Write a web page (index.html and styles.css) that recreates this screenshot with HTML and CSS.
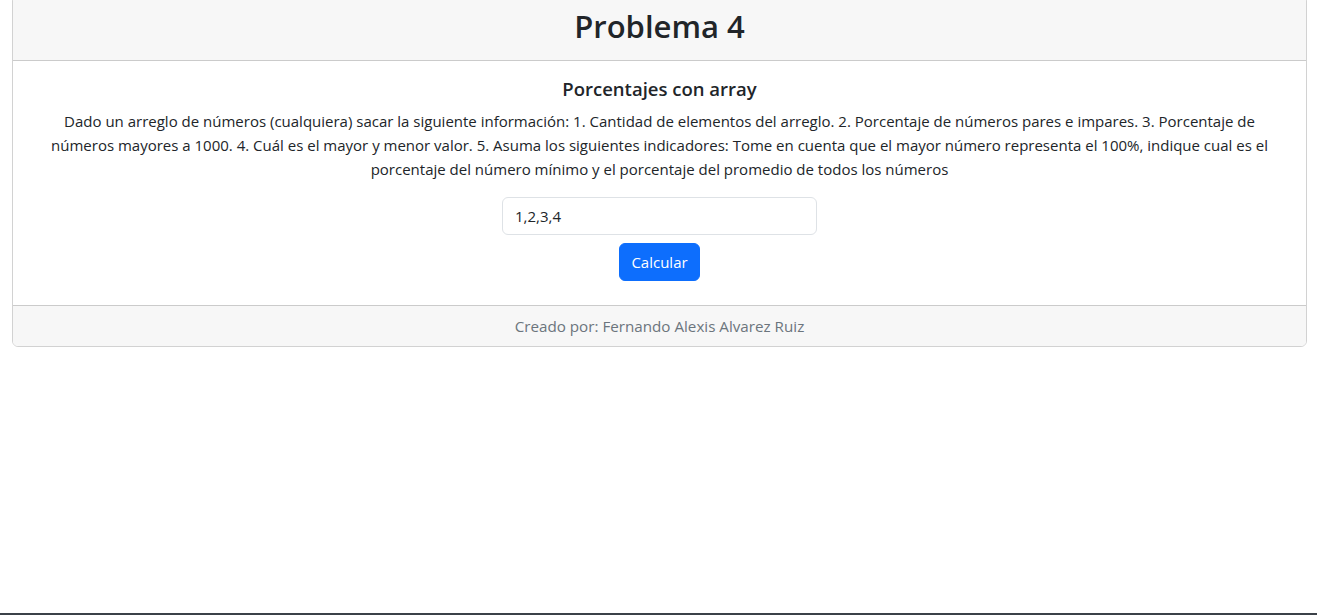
FILE: index.html
```html
<!DOCTYPE html>
<html lang="es">
<head>
<meta charset="utf-8">
<title>Problema 4</title>
<link rel="stylesheet" href="styles.css">
</head>
<body>
<div class="card">
  <div class="card-header">
    <h1 class="title">Problema 4</h1>
  </div>
  <div class="card-body">
    <h5 class="subtitle">Porcentajes con array</h5>
    <p class="desc">Dado un arreglo de números (cualquiera) sacar la siguiente información: 1. Cantidad de elementos del arreglo. 2. Porcentaje de números pares e impares. 3. Porcentaje de números mayores a 1000. 4. Cuál es el mayor y menor valor. 5. Asuma los siguientes indicadores: Tome en cuenta que el mayor número representa el 100%, indique cual es el porcentaje del número mínimo y el porcentaje del promedio de todos los números</p>
    <form class="form">
      <input class="input" type="text" value="1,2,3,4">
      <button class="btn" type="button">Calcular</button>
    </form>
  </div>
  <div class="card-footer">Creado por: Fernando Alexis Alvarez Ruiz</div>
</div>
<div class="bottom-line"></div>
</body>
</html>
```
FILE: styles.css
```css
* { box-sizing: border-box; }
html, body { margin: 0; padding: 0; }
body {
  font-family: "Open Sans", "Noto Sans", sans-serif;
  font-size: 16px;
  line-height: 1.5;
  color: #212529;
  background: #fff;
}
.card {
  margin: -5px 10px 0 12px;
  border: 1px solid rgba(0,0,0,.175);
  border-radius: 6px;
  overflow: hidden;
}
.card-header {
  background: #f7f7f7;
  border-bottom: 1px solid rgba(0,0,0,.175);
  padding: 6px 16px 10px;
  text-align: center;
}
.title {
  margin: 0;
  font-size: 31px;
  line-height: 48px;
  font-weight: 600;
}
.card-body {
  padding: 16px 16px 24px;
  text-align: center;
}
.subtitle {
  margin: 0 0 8px;
  font-size: 18.5px;
  line-height: 24px;
  font-weight: 600;
}
.desc {
  max-width: 1238px;
  margin: 0 auto 16px;
  font-size: 15px;
  line-height: 24px;
}
.form {
  display: flex;
  flex-direction: column;
  align-items: center;
  gap: 8px;
}
.input {
  width: 315px;
  height: 38px;
  padding: 6px 12px;
  font: inherit;
  font-size: 15px;
  color: #212529;
  border: 1px solid #dee2e6;
  border-radius: 6px;
  outline: none;
}
.btn {
  height: 38px;
  padding: 6px 11px;
  font: inherit;
  font-size: 15px;
  color: #fff;
  background: #0d6efd;
  border: 1px solid #0d6efd;
  border-radius: 6px;
}
.card-footer {
  background: #f7f7f7;
  border-top: 1px solid rgba(0,0,0,.175);
  padding: 8px 16px;
  text-align: center;
  color: #6c757d;
  font-size: 15.2px;
  line-height: 24px;
}
.bottom-line {
  position: fixed;
  left: 0;
  right: 0;
  bottom: 0;
  height: 2px;
  background: #3b4148;
}
```
